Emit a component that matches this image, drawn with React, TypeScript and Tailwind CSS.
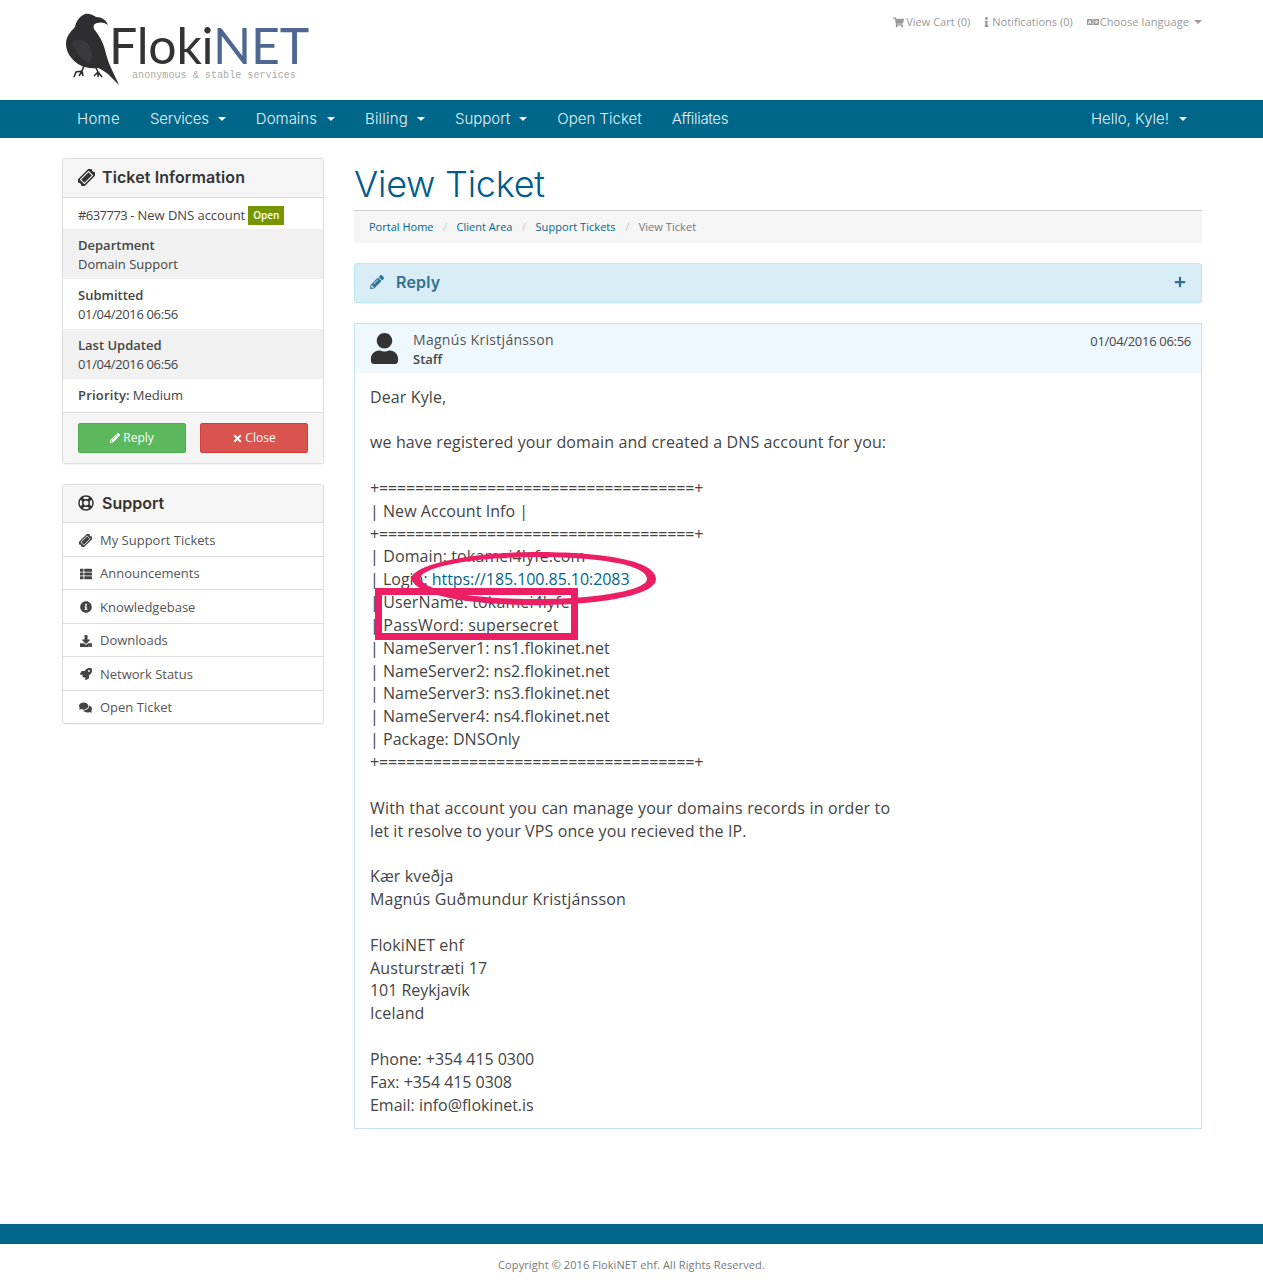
import React from 'react';
import {
  FaComments,
  FaDownload,
  FaInfo,
  FaInfoCircle,
  FaLanguage,
  FaPencilAlt,
  FaPlus,
  FaRegLifeRing,
  FaRocket,
  FaShoppingCart,
  FaThList,
  FaTimes,
  FaUser,
} from 'react-icons/fa';

const Caret = ({ className }: { className: string }) => (
  <span className={`inline-block h-0 w-0 border-x-[4px] border-t-[4px] border-x-transparent ${className}`} />
);

// the old diagonal ticket glyph, react-icons only has the newer fat one
const TicketIcon = ({ size }: { size: number }) => (
  <svg width={size} height={size} viewBox="0 0 16 16" className="shrink-0">
    <g transform="rotate(-45 8 8)">
      <path
        d="M-1 3.5 H17 V6.2 C15.8 6.6 15.8 9.4 17 9.8 V12.5 H-1 V9.8 C0.2 9.4 0.2 6.6 -1 6.2 Z"
        fill="currentColor"
      />
      <rect x="2.6" y="5.4" width="10.8" height="5.2" fill="none" stroke="#ffffff" strokeWidth="0.9" />
    </g>
  </svg>
);

const navItems = [
  { label: 'Home', className: 'tracking-[0.3px]', caret: '' },
  { label: 'Services', className: 'tracking-[-0.2px]', caret: 'ml-[9px]' },
  { label: 'Domains', className: '', caret: 'ml-[10px]' },
  { label: 'Billing', className: 'tracking-[0.2px]', caret: 'ml-[9px]' },
  { label: 'Support', className: '', caret: 'ml-[9px]' },
  { label: 'Open Ticket', className: '', caret: '' },
  { label: 'Affiliates', className: 'tracking-[-0.3px]', caret: '' },
];

const supportLinks = [
  { label: 'My Support Tickets', icon: <TicketIcon size={13} /> },
  { label: 'Announcements', icon: <FaThList className="text-[12px]" /> },
  { label: 'Knowledgebase', icon: <FaInfoCircle className="text-[12px]" /> },
  { label: 'Downloads', icon: <FaDownload className="text-[12px]" /> },
  { label: 'Network Status', icon: <FaRocket className="text-[12px]" /> },
  { label: 'Open Ticket', icon: <FaComments className="text-[13px]" /> },
];

const Logo = () => (
  <div className="ml-[-4px] flex items-start">
    <svg width="62" height="80" viewBox="60 10 62 80" className="mt-[10px] ml-[2px] shrink-0">
      <path
        d="M85 14 C89 13 93 15 96 17 C102 17 106 20 108 25 C104 22 100 22 97 23 C94 24 93 25 94 29 C99 35 103 42 105 50 C107 58 109 64 112 70 L119 85 L108 74 C104 71 101 69 98 68 C92 69 84 68 78 64 C71 59 66 52 66 44 C66 37 70 32 75 27 C76 21 80 16 85 14 Z"
        fill="#2e2e31"
      />
      <path d="M72 42 C80 38 88 40 91 50 C92 55 92 60 90 64 C84 61 75 54 72 42 Z" fill="#3a3a3e" />
      <path
        d="M84 66 L82 71 L76 72 L74 77 M82 71 L79 76 M82 71 L83 76 M96 68 L98 72 L94 76 M98 72 L98 77 M98 72 L102 77"
        stroke="#2e2e31"
        strokeWidth="1.6"
        fill="none"
      />
    </svg>
    <div className="ml-[-13px] mt-[20px] flex flex-col">
      <div className="font-['Lato',sans-serif] text-[50px] leading-[50px] font-normal tracking-[-0.2px]">
        <span className="text-[#333336]">Floki</span>
        <span className="text-[#4d6792]">NET</span>
      </div>
      <div className="ml-[23px] font-['Liberation_Mono',monospace] text-[10px] leading-[12px] tracking-[0.07px] text-[#aaaaaa]">
        anonymous &amp; stable services
      </div>
    </div>
  </div>
);

const Header = () => (
  <header className="ml-[47px] flex h-[100px] w-[1170px] justify-between px-[15px]">
    <Logo />
    <div className="flex h-[44px] items-center gap-[14px] text-[11px] text-[#999999]">
      <span className="flex items-center gap-[2px]">
        <FaShoppingCart className="text-[11px]" />
        View Cart (0)
      </span>
      <span className="flex items-center gap-[3px]">
        <FaInfo className="w-[5px] text-[10px]" />
        Notifications (0)
      </span>
      <span className="flex items-center gap-[1px] tracking-[0.1px]">
        <FaLanguage className="text-[12px]" />
        Choose language
        <Caret className="ml-[4px] border-t-[#999999]" />
      </span>
    </div>
  </header>
);

const Nav = () => (
  <nav className="h-[38px] bg-[#00678b]">
    <div className="ml-[47px] flex h-full w-[1170px] items-center justify-between px-[15px] font-['Inter',sans-serif] text-[15px] font-light text-[#e6f1f5]">
      <ul className="flex">
        {navItems.map((item) => (
          <li key={item.label} className={`flex items-center px-[15px] ${item.className}`}>
            {item.label}
            {item.caret && <Caret className={`border-t-white ${item.caret}`} />}
          </li>
        ))}
      </ul>
      <div className="flex items-center px-[15px]">
        Hello, Kyle!
        <Caret className="ml-[10px] border-t-white" />
      </div>
    </div>
  </nav>
);

const InfoRow = ({ title, value, shaded, date }: { title: string; value: string; shaded?: boolean; date?: boolean }) => (
  <div className={`flex h-[50px] flex-col justify-center px-[15px] pt-[2px] leading-[19px] ${shaded ? 'bg-[#f1f1f1]' : ''}`}>
    <strong className="font-semibold">{title}</strong>
    <span className={date ? 'tracking-[-0.35px]' : ''}>{value}</span>
  </div>
);

const Sidebar = () => (
  <aside className="w-[262px] shrink-0">
    <div className="overflow-hidden rounded-[3px] border border-[#dddddd] text-[13px] text-[#444444] shadow-[0_1px_1px_rgba(0,0,0,0.05)]">
      <div className="flex h-[39px] items-center border-b border-[#dddddd] bg-[#f5f5f5] px-[15px] pb-[2px] font-['Inter',sans-serif] text-[16px] font-semibold tracking-[0.1px] text-[#333333]">
        <span className="mr-[7px] flex w-[17px] justify-center">
          <TicketIcon size={17} />
        </span>
        Ticket Information
      </div>
      <div className="flex h-[31px] items-center px-[15px] pt-[4px]">
        <span className="tracking-[-0.55px]">#637773</span>
        <span className="ml-[3px] tracking-[-0.05px]">- New DNS account</span>
        <span className="ml-[3px] flex h-[19px] items-center bg-[#779500] px-[5px] text-[10px] font-semibold text-white">
          Open
        </span>
      </div>
      <InfoRow title="Department" value="Domain Support" shaded />
      <InfoRow title="Submitted" value="01/04/2016 06:56" date />
      <InfoRow title="Last Updated" value="01/04/2016 06:56" shaded date />
      <div className="flex h-[33px] items-center px-[15px]">
        <strong className="mr-[3px] font-semibold tracking-[0.2px]">Priority:</strong> Medium
      </div>
      <div className="flex h-[51px] items-center justify-between border-t border-[#dddddd] bg-[#f5f5f5] px-[15px] text-[12px] text-white">
        <button className="flex h-[30px] w-[108px] items-center justify-center gap-[3px] rounded-[2px] border border-[#4cae4c] bg-[#5cb85c]">
          <FaPencilAlt className="text-[10px]" />
          Reply
        </button>
        <button className="flex h-[30px] w-[108px] items-center justify-center gap-[2px] rounded-[2px] border border-[#d43f3a] bg-[#d9534f]">
          <FaTimes className="text-[11px]" />
          Close
        </button>
      </div>
    </div>

    <div className="mt-[20px] overflow-hidden rounded-[3px] border border-[#dddddd] text-[13px] text-[#555555] shadow-[0_1px_1px_rgba(0,0,0,0.05)]">
      <div className="flex h-[38px] items-center border-b border-[#dddddd] bg-[#f5f5f5] px-[15px] pb-[1px] font-['Inter',sans-serif] text-[16px] font-semibold text-[#333333]">
        <FaRegLifeRing className="mr-[8px] text-[16px]" />
        Support
      </div>
      {supportLinks.map((link, i) => (
        <div
          key={link.label}
          className={`flex items-center px-[15px] ${i < supportLinks.length - 1 ? 'h-[33.5px] border-b border-[#dddddd] pt-[2px]' : 'h-[32.5px] pt-[1px]'}`}
        >
          <span className="mr-[7px] flex w-[15px] justify-center text-[#444444]">{link.icon}</span>
          {link.label}
        </div>
      ))}
    </div>
  </aside>
);

const messageTop = [
  'Dear Kyle,',
  '',
  'we have registered your domain and created a DNS account for you:',
  '',
  '+===================================+',
  '| New Account Info |',
  '+===================================+',
  '| Domain: tokamei4lyfe.com',
];

const messageBottom = [
  '| UserName: tokamei4lyfe',
  '| PassWord: supersecret',
  '| NameServer1: ns1.flokinet.net',
  '| NameServer2: ns2.flokinet.net',
  '| NameServer3: ns3.flokinet.net',
  '| NameServer4: ns4.flokinet.net',
  '| Package: DNSOnly',
  '+===================================+',
  '',
  'With that account you can manage your domains records in order to',
  'let it resolve to your VPS once you recieved the IP.',
  '',
  'Kær kveðja',
  'Magnús Guðmundur Kristjánsson',
  '',
  'FlokiNET ehf',
  'Austurstræti 17',
  '101 Reykjavík',
  'Iceland',
  '',
  'Phone: +354 415 0300',
  'Fax: +354 415 0308',
  'Email: info@flokinet.is',
];

const Line = ({ text }: { text: string }) => {
  // ruler lines and phone numbers run a bit tighter than the prose
  let tracking = 'tracking-[0.12px]';
  if (text.startsWith('+')) tracking = 'tracking-[-0.14px]';
  else if (/^(Phone|Fax|101)/.test(text)) tracking = 'tracking-[-0.05px]';
  else if (text.startsWith('Email')) tracking = 'tracking-[-0.02px]';
  else if (text.startsWith('Magn') || text.startsWith('| Pass')) tracking = 'tracking-[0.2px]';
  else if (/^\| (Name|Package|New)/.test(text)) tracking = 'tracking-[0.04px]';
  else if (text.startsWith('With')) tracking = 'tracking-[0.17px]';
  return <div className={`h-[22.857px] whitespace-pre ${tracking}`}>{text}</div>;
};

const Message = () => (
  <div className="relative mt-[20px] border border-[#c5e3f0]">
    <div className="flex h-[49px] justify-between bg-[#f0f8ff] pr-[10px] pl-[14px]">
      <div className="flex">
        <FaUser className="mt-[9px] text-[31px] text-[#333333]" />
        <div className="ml-[13px] pt-[6px] text-[#555555]">
          <div className="text-[14px] leading-[20px] tracking-[0.3px]">Magnús Kristjánsson</div>
          <div className="text-[13px] leading-[19px] font-semibold text-[#444444]">Staff</div>
        </div>
      </div>
      <div className="pt-[7px] text-[13px] leading-[20px] tracking-[-0.3px] text-[#444444]">01/04/2016 06:56</div>
    </div>
    <div className="px-[15px] pt-[11.5px] pb-[12.5px] text-[16px] text-[#444444]">
      {messageTop.map((text, i) => (
        <Line key={i} text={text} />
      ))}
      <div className="h-[22.857px]">
        | Login: <span className="tracking-[-0.07px] text-[#00678b]">https://185.100.85.10:2083</span>
      </div>
      {messageBottom.map((text, i) => (
        <Line key={i} text={text} />
      ))}
    </div>
    {/* red marks somebody scribbled on the screenshot */}
    <svg width="250" height="60" viewBox="0 0 250 60" className="absolute top-[226px] left-[55px]">
      <path
        fillRule="evenodd"
        d="M1 28 C6 12 70 2 125 2 C190 2 246 10 246 29 C246 46 185 56 115 55 C60 54 5 46 1 28 Z M10 28 C14 15 75 7 125 7 C185 7 237 14 237 29 C237 41 180 50 115 49 C65 48 14 42 10 28 Z"
        fill="#ec1e64"
      />
    </svg>
    <div className="absolute top-[264px] left-[20px] h-[52px] w-[203px] border-[7px] border-[#ec1e64]" />
  </div>
);

const Main = () => (
  <main className="min-w-0 flex-1">
    <h1 className="h-[53px] border-b border-[#cccccc] pt-[6px] font-['Inter',sans-serif] text-[36px] leading-[40px] font-light tracking-[-0.25px] text-[#005c8a]">
      View Ticket
    </h1>
    <ol className="flex h-[32px] items-center rounded-b-[3px] bg-[#f5f5f5] px-[15px] text-[11px] text-[#777777]">
      <li className="text-[#00678b]">Portal Home</li>
      <li className="px-[9.5px] text-[#cccccc]">/</li>
      <li className="text-[#00678b]">Client Area</li>
      <li className="px-[9.5px] text-[#cccccc]">/</li>
      <li className="text-[#00678b] tracking-[0.05px]">Support Tickets</li>
      <li className="px-[9.5px] text-[#cccccc]">/</li>
      <li className="tracking-[0.05px]">View Ticket</li>
    </ol>
    <div className="mt-[20px] flex h-[40px] items-center justify-between rounded-[3px] border border-[#bce8f1] bg-[#d9edf7] px-[15px] pb-[2px] font-['Inter',sans-serif] text-[16px] font-semibold tracking-[0.2px] text-[#31708f] shadow-[0_1px_1px_rgba(0,0,0,0.05)]">
      <span className="flex items-center">
        <FaPencilAlt className="mr-[12px] text-[14px]" />
        Reply
      </span>
      <FaPlus className="text-[12px]" />
    </div>
    <Message />
  </main>
);

export default function App() {
  return (
    <div className="flex min-h-[1284px] flex-col bg-white font-['Open_Sans',sans-serif]">
      <Header />
      <Nav />
      <div className="ml-[47px] flex w-[1170px] gap-[30px] px-[15px] pt-[20px]">
        <Sidebar />
        <Main />
      </div>
      <footer className="mt-auto">
        <div className="h-[20px] bg-[#00678b]" />
        <p className="flex h-[40px] items-center justify-center pt-[2px] text-[11px] tracking-[0.1px] text-[#777777]">
          Copyright © 2016 FlokiNET ehf. All Rights Reserved.
        </p>
      </footer>
    </div>
  );
}
